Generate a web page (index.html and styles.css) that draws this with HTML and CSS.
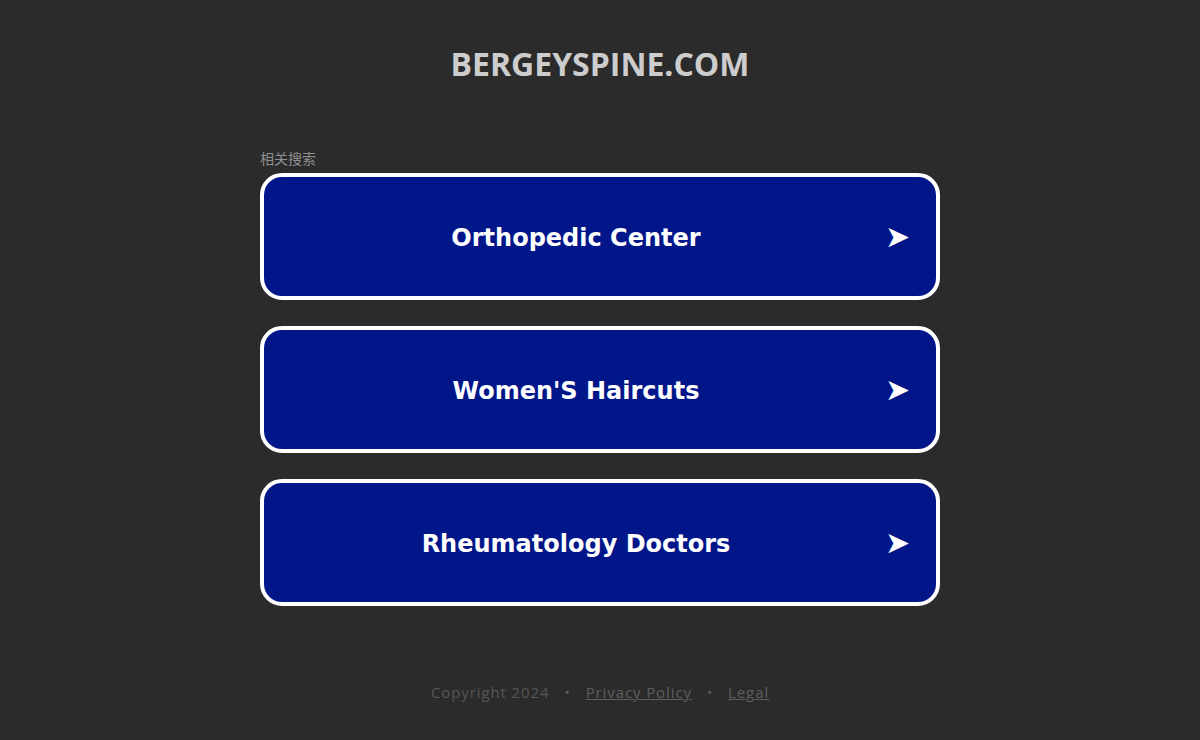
FILE: index.html
```html
<!DOCTYPE html>
<html lang="en">
<head>
<meta charset="utf-8">
<title>bergeyspine.com</title>
<link rel="stylesheet" href="styles.css">
</head>
<body>
<div class="page">
  <header class="header">
    <h1 class="domain">BERGEYSPINE.COM</h1>
  </header>
  <main class="main">
    <div class="related">相关搜索</div>
    <ul class="links">
      <li><a class="link-btn" href="#"><span class="link-text">Orthopedic Center</span><span class="link-arrow">➤</span></a></li>
      <li><a class="link-btn" href="#"><span class="link-text">Women'S Haircuts</span><span class="link-arrow">➤</span></a></li>
      <li><a class="link-btn" href="#"><span class="link-text">Rheumatology Doctors</span><span class="link-arrow">➤</span></a></li>
    </ul>
  </main>
  <footer class="footer">
    <span>Copyright 2024</span>
    <span class="dot">•</span>
    <a href="#">Privacy Policy</a>
    <span class="dot">•</span>
    <a href="#">Legal</a>
  </footer>
</div>
</body>
</html>
```

FILE: styles.css
```css
html, body {
  margin: 0;
  padding: 0;
  background: #2b2b2b;
}
body {
  font-family: "Open Sans", "Liberation Sans", sans-serif;
}
.page {
  width: 680px;
  margin: 0 auto;
  display: flex;
  flex-direction: column;
}
.header {
  padding-top: 44px;
  text-align: center;
}
.domain {
  margin: 0;
  font-family: "Open Sans", sans-serif;
  font-weight: 700;
  font-size: 32px;
  line-height: 40px;
  color: #cdcdcd;
}
.main {
  margin-top: 65px;
}
.related {
  font-family: "Noto Sans CJK SC", sans-serif;
  font-size: 14px;
  line-height: 18px;
  color: #8f8f8f;
}
.links {
  list-style: none;
  margin: 6px 0 0;
  padding: 0;
  display: flex;
  flex-direction: column;
  gap: 26px;
}
.link-btn {
  display: flex;
  align-items: center;
  height: 119px;
  border: 4px solid #ffffff;
  border-radius: 22px;
  background: #011689;
  color: #ffffff;
  text-decoration: none;
  padding: 0 30px 0 3px;
}
.link-text {
  flex: 1;
  text-align: center;
  font-family: "DejaVu Sans", sans-serif;
  font-weight: 700;
  font-size: 24px;
  padding-top: 2px;
}
.link-arrow {
  width: 21px;
  font-family: "DejaVu Sans", sans-serif;
  font-size: 30px;
  line-height: 1;
  text-align: center;
}
.footer {
  margin-top: 76px;
  text-align: center;
  font-family: "Open Sans", sans-serif;
  font-size: 15px;
  letter-spacing: 0.9px;
  color: #565656;
}
.footer a {
  color: #5e5e5e;
}
.dot {
  margin: 0 10px;
}
```
